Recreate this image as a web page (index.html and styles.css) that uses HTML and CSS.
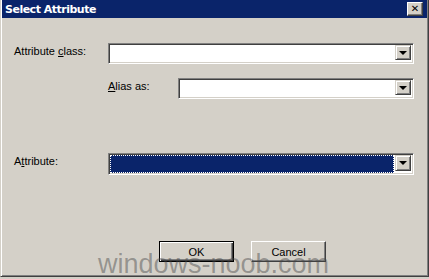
FILE: index.html
```html
<!DOCTYPE html>
<html lang="en">
<head>
  <meta charset="UTF-8">
  <title>Select Attribute</title>
  <link rel="stylesheet" href="styles.css">
</head>
<body>

<!-- dialog window -->
<div class="window">
  <div class="titlebar">
    <span class="title">Select Attribute</span>
    <span class="close">&#x2715;</span>
  </div>

  <div class="content">
    <div class="row row-class">
      <label class="label">Attribute <u>c</u>lass:</label>
      <div class="combo">
        <div class="field"></div>
        <div class="drop"><span class="arrow"></span></div>
      </div>
    </div>

    <div class="row row-alias">
      <label class="label label-alias"><u>A</u>lias as:</label>
      <div class="combo">
        <div class="field"></div>
        <div class="drop"><span class="arrow"></span></div>
      </div>
    </div>

    <div class="row row-attr">
      <label class="label">A<u>t</u>tribute:</label>
      <div class="combo tall">
        <div class="field selected"></div>
        <div class="drop"><span class="arrow"></span></div>
      </div>
    </div>

    <div class="buttons">
      <button class="btn default">OK</button>
      <button class="btn">Cancel</button>
    </div>
  </div>

  <div class="watermark">windows-noob.com</div>
</div>

</body>
</html>
```

FILE: styles.css
```css
body {
  margin: 0;
  background: #d4d0c8;
  font-family: "Liberation Sans", Arial, sans-serif;
  font-size: 11px;
  color: #000;
}

.window {
  position: relative;
  width: 429px;
  height: 277px;
  box-sizing: border-box;
  background: #d4d0c8;
  border-left: 1px solid #d4d0c8;
  border-right: 1px solid #404040;
  border-bottom: 1px solid #404040;
  box-shadow: inset 1px 0 #fff, inset -1px -1px #808080;
}

/* title bar */
.titlebar {
  display: flex;
  align-items: center;
  justify-content: space-between;
  height: 18px;
  margin: 0 1px 0 1px;
  padding: 0 4px 0 3px;
  background: #0a246a;
}
.title {
  color: #fff;
  font-family: "DejaVu Sans", sans-serif;
  font-weight: bold;
  font-size: 11px;
  letter-spacing: -0.5px;
}
.close {
  display: flex;
  align-items: center;
  justify-content: center;
  width: 16px;
  height: 14px;
  box-sizing: border-box;
  background: #d4d0c8;
  border: 1px solid;
  border-color: #fff #404040 #404040 #fff;
  box-shadow: inset -1px -1px #808080;
  font-family: "DejaVu Sans", sans-serif;
  font-weight: bold;
  font-size: 10px;
  line-height: 1;
}

.content {
  padding: 0 14px 0 13px;
}

.row {
  display: flex;
  align-items: flex-start;
}
.row-class { margin-top: 25px; }
.row-alias { margin-top: 14px; padding-left: 94px; }
.row-attr { margin-top: 54px; }

.label {
  width: 94px;
  flex: none;
  padding-top: 2px;
}
.label-alias { width: 70px; }

/* combo box */
.combo {
  flex: 1;
  display: flex;
  height: 21px;
  box-sizing: border-box;
  padding: 2px;
  background: #fff;
  border: 1px solid;
  border-color: #808080 #fff #fff #808080;
  box-shadow: inset 1px 1px #404040, inset -1px -1px #d4d0c8;
}
.combo.tall { height: 22px; }
.field {
  flex: 1;
}
.field.selected {
  background: #0a246a;
  outline: 1px dotted #fff;
  outline-offset: -1px;
  margin: -1px 1px -1px -1px;
}
.drop {
  position: relative;
  width: 16px;
  height: 15px;
  box-sizing: border-box;
  margin-top: -1px;
  background: #d4d0c8;
  border: 1px solid;
  border-color: #d4d0c8 #404040 #404040 #d4d0c8;
  box-shadow: inset 1px 1px #fff, inset -1px -1px #808080;
}
.tall .drop { height: 16px; }
.arrow {
  position: absolute;
  left: 3px;
  top: 5px;
  width: 0;
  height: 0;
  border-left: 4px solid transparent;
  border-right: 4px solid transparent;
  border-top: 4px solid #000;
}

/* buttons */
.buttons {
  display: flex;
  gap: 17px;
  margin-top: 66px;
  padding-left: 145px;
}
.btn {
  width: 75px;
  height: 21px;
  box-sizing: border-box;
  padding: 0;
  background: #d4d0c8;
  font-family: "Liberation Sans", Arial, sans-serif;
  font-size: 11px;
  color: #000;
  border: 1px solid;
  border-color: #fff #404040 #404040 #fff;
  box-shadow: inset -1px -1px #808080;
}
.btn.default {
  border: 1px solid #000;
  box-shadow: inset 1px 1px #fff, inset -1px -1px #404040, inset -2px -2px #808080;
}

/* site watermark over the dialog */
.watermark {
  position: absolute;
  left: 97px;
  top: 253px;
  font-family: "Liberation Sans", Arial, sans-serif;
  font-size: 27px;
  line-height: 22px;
  color: rgba(70, 70, 70, 0.45);
  white-space: nowrap;
}
```
